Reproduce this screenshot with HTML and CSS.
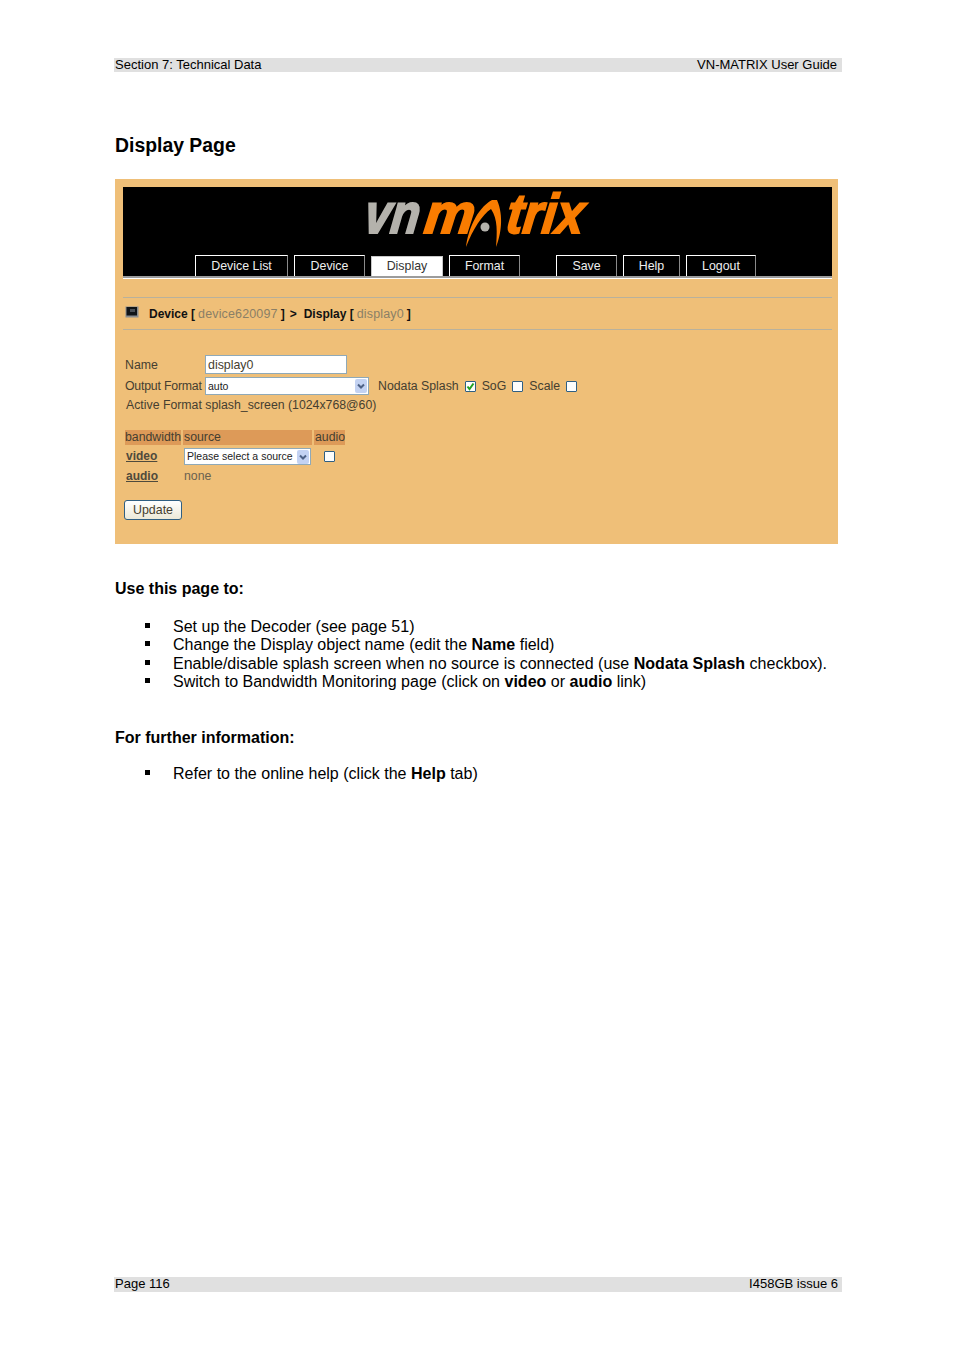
FILE: index.html
```html
<!DOCTYPE html>
<html lang="en">
<head>
  <meta charset="UTF-8" />
  <title>Display Page</title>
  <link rel="stylesheet" href="styles.css">
</head>
<body>
  <div class="page">
    <div class="running-bar"><span>Section 7: Technical Data</span><span>VN-MATRIX User Guide</span></div>

    <h1>Display Page</h1>

    <!-- screenshot of the web interface -->
    <div class="panel">
      <div class="masthead">
        <div class="logo">
          <svg class="logo-svg" width="250" height="60" viewBox="0 0 250 60">
            <text class="logo-text logo-grey" transform="translate(13 44) skewX(-7)" textLength="55" lengthAdjust="spacingAndGlyphs">vn</text>
            <text class="logo-text logo-orange" transform="translate(73 44) skewX(-7)" textLength="50" lengthAdjust="spacingAndGlyphs">m</text>
            <path fill="#f97c00" d="M116 58 C118 42 126 20 142 11 L147 11 C154 27 151 46 146 58 C147 44 148 30 141 20 C132 26 123 40 116 58 Z"/>
            <circle cx="135" cy="38" r="4.5" fill="#b4b2ac"/>
            <text class="logo-text logo-orange" transform="translate(155 44) skewX(-7)" textLength="77" lengthAdjust="spacingAndGlyphs">trix</text>
          </svg>
        </div>
        <nav class="tabs">
          <a class="tab tab-list">Device List</a>
          <a class="tab tab-device">Device</a>
          <a class="tab tab-display active">Display</a>
          <a class="tab tab-format">Format</a>
          <a class="tab tab-save">Save</a>
          <a class="tab tab-help">Help</a>
          <a class="tab tab-logout">Logout</a>
        </nav>
      </div>

      <div class="crumbs">
        <svg class="crumb-icon" width="14" height="12" viewBox="0 0 14 12">
          <rect x="0.5" y="0.5" width="13" height="11" fill="#8a8d90"/>
          <rect x="1.5" y="1" width="10.5" height="8.5" fill="#101418"/>
          <rect x="5" y="3" width="5" height="3" fill="#4a5058"/>
        </svg>
        <b>Device [</b> <span class="crumb-val">device620097</span> <b>]</b>
        <b class="crumb-sep">&gt;</b>
        <b>Display [</b> <span class="crumb-val">display0</span> <b>]</b>
      </div>

      <form class="settings">
        <div class="row row-name">
          <label class="field-label">Name</label>
          <input class="text-input" type="text" value="display0">
        </div>
        <div class="row row-format">
          <label class="field-label tight">Output Format</label>
          <div class="select select-format">
            <select><option>auto</option></select>
            <svg class="select-arrow" width="12" height="14" viewBox="0 0 12 14"><rect width="12" height="14" rx="2" fill="#c3d2f2"/><path d="M3 5.5 L6 8.5 L9 5.5" fill="none" stroke="#4d6185" stroke-width="2"/></svg>
          </div>
          <span class="opt opt-first">Nodata Splash</span>
          <span class="check"><svg width="9" height="9" viewBox="0 0 9 9"><path d="M1.5 4.5 L3.5 7 L7.5 1.5" fill="none" stroke="#21a121" stroke-width="2"/></svg></span>
          <span class="opt">SoG</span>
          <span class="check"></span>
          <span class="opt">Scale</span>
          <span class="check"></span>
        </div>
        <div class="active-format">Active Format splash_screen (1024x768@60)</div>

        <table class="streams">
          <tr class="streams-head"><th class="col-bw">bandwidth</th><th class="col-src">source</th><th class="col-audio">audio</th></tr>
          <tr class="stream-video">
            <td><a class="stream-link">video</a></td>
            <td>
              <div class="select select-source">
                <select><option>Please select a source</option></select>
                <svg class="select-arrow" width="12" height="14" viewBox="0 0 12 14"><rect width="12" height="14" rx="2" fill="#c3d2f2"/><path d="M3 5.5 L6 8.5 L9 5.5" fill="none" stroke="#4d6185" stroke-width="2"/></svg>
              </div>
            </td>
            <td class="cell-check"><span class="check"></span></td>
          </tr>
          <tr class="stream-audio">
            <td><a class="stream-link">audio</a></td>
            <td class="none">none</td>
            <td></td>
          </tr>
        </table>

        <button class="update" type="button">Update</button>
      </form>
    </div>

    <h2 class="first-h2">Use this page to:</h2>
    <ul>
      <li>Set up the Decoder (see page 51)</li>
      <li>Change the Display object name (edit the <b>Name</b> field)</li>
      <li>Enable/disable splash screen when no source is connected (use <b>Nodata Splash</b> checkbox).</li>
      <li>Switch to Bandwidth Monitoring page (click on <b>video</b> or <b>audio</b> link)</li>
    </ul>

    <h2>For further information:</h2>
    <ul>
      <li>Refer to the online help (click the <b>Help</b> tab)</li>
    </ul>

    <div class="running-bar footer-bar"><span>Page 116</span><span>I458GB issue 6</span></div>
  </div>
</body>
</html>
```

FILE: styles.css
```css
:root {
  --panel: #efbf78;
  --rule: #b9b19c;
  --ui-text: #453e30;
  --orange: #f97c00;
}

* {
  box-sizing: border-box;
}

body {
  margin: 0;
  background: white;
  color: #000;
  font-family: "Liberation Sans", Arial, sans-serif;
}

.page {
  width: 954px;
  height: 1351px;
  padding: 58px 112px 59px 114px;
  display: flex;
  flex-direction: column;
}

.running-bar {
  height: 14px;
  background: #e0e0e0;
  display: flex;
  justify-content: space-between;
  padding: 0 5px 0 1px;
  font-size: 13px;
  line-height: 14px;
}

.footer-bar {
  height: 15px;
  margin-top: auto;
  padding-right: 4px;
}

h1 {
  font-size: 19.4px;
  line-height: 22px;
  margin: 62px 0 23px 1px;
}

h2 {
  font-size: 16px;
  line-height: 18px;
  margin: 38px 0 17px 1px;
}

.first-h2 {
  margin-top: 36px;
  margin-bottom: 19px;
}

ul {
  list-style: none;
  margin: 0;
  padding: 0 0 0 59px;
  font-size: 16.04px;
  line-height: 18.4px;
}

li {
  position: relative;
}

li::before {
  content: "";
  position: absolute;
  left: -28px;
  top: 6px;
  width: 5px;
  height: 5px;
  background: #000;
}

/* screenshot panel */
.panel {
  width: 723px;
  height: 365px;
  margin-left: 1px;
  background: var(--panel);
  padding: 8px 6px 0 8px;
  font-size: 12.3px;
  color: var(--ui-text);
}

.masthead {
  height: 89px;
  background: #000;
  box-shadow: 0 2px 0 #9c9c9c, 0 3px 0 #fff;
  display: flex;
  flex-direction: column;
  justify-content: flex-end;
}

.logo {
  height: 66px;
  padding-left: 227px;
}

.logo-svg {
  overflow: visible;
}

.logo-text {
  font-family: "Liberation Sans", Arial, sans-serif;
  font-size: 56px;
  font-weight: bold;
  font-style: italic;
  stroke-width: 2px;
}

.logo-grey {
  fill: #b4b2ac;
  stroke: #b4b2ac;
}

.logo-orange {
  fill: var(--orange);
  stroke: var(--orange);
}

.tabs {
  display: flex;
  gap: 6px;
  padding-left: 72px;
  height: 21px;
}

.tab {
  height: 21px;
  border: 1px solid #fff;
  border-right-color: #8a8a8a;
  border-bottom: none;
  color: #eee;
  text-align: center;
  line-height: 20px;
  font-size: 12.4px;
}

.tab.active {
  background: #fff;
  color: #333;
  border-color: #c8c8c8;
  margin-top: 1px;
  height: 20px;
  line-height: 18px;
}

.tab-list { width: 93px; }
.tab-device { width: 71px; }
.tab-display { width: 72px; }
.tab-format { width: 71px; margin-right: 30px; }
.tab-save { width: 61px; }
.tab-help { width: 57px; }
.tab-logout { width: 70px; }

.crumbs {
  height: 33px;
  margin-top: 21px;
  border-top: 1px solid var(--rule);
  border-bottom: 1px solid var(--rule);
  display: flex;
  align-items: center;
  gap: 3px;
  font-size: 12px;
  color: #111;
  padding-left: 2px;
  white-space: pre;
}

.crumb-icon {
  margin-right: 7px;
  margin-top: -3px;
}

.crumb-val {
  color: #8b7f66;
  font-size: 12.5px;
  letter-spacing: 0.15px;
}

.crumb-sep {
  margin: 0 4px 0 2px;
}

.settings {
  padding: 25px 0 0 2px;
}

.row {
  display: flex;
  align-items: center;
}

.row-name {
  height: 19px;
}

.row-format {
  height: 18px;
  margin-top: 3px;
}

.field-label {
  width: 80px;
  flex: none;
}

.tight {
  letter-spacing: -0.2px;
}

.text-input {
  width: 142px;
  height: 19px;
  border: 1px solid #8fa9b8;
  background: #fff;
  padding: 0 2px;
  font: 12.4px "Liberation Sans", sans-serif;
  color: var(--ui-text);
  border-radius: 0;
  outline: none;
}

.select {
  position: relative;
  background: #fff;
  border: 1px solid #8fa9b8;
}

.select select {
  appearance: none;
  border: none;
  background: transparent;
  display: block;
  width: 100%;
  height: 100%;
  padding: 0 0 0 2px;
  font: 10.5px "Liberation Sans", sans-serif;
  color: #222;
}

.select-arrow {
  position: absolute;
  right: 1px;
  top: 1px;
}

.select-format {
  width: 164px;
  height: 18px;
}

.select-source {
  width: 127px;
  height: 17px;
}

.opt {
  white-space: nowrap;
}

.opt-first {
  margin-left: 9px;
}

.check {
  width: 11px;
  height: 11px;
  flex: none;
  margin: 0 6px;
  background: #fdfdfb;
  border: 1px solid #2f5f83;
  border-radius: 1px;
  display: inline-flex;
  align-items: center;
  justify-content: center;
}

.active-format {
  margin-top: 2px;
  line-height: 17px;
  padding-left: 1px;
}

.streams {
  border-collapse: separate;
  border-spacing: 2px 0;
  margin: 16px 0 0 -2px;
  table-layout: fixed;
  width: 224px;
}

.streams th {
  background: #dd9a58;
  font-weight: normal;
  text-align: left;
  height: 15px;
  padding: 0 0 0 1px;
  line-height: 15px;
  overflow: hidden;
  white-space: nowrap;
}

.streams .col-bw { width: 56px; padding-left: 0; }
.col-src { width: 129px; }
.col-audio { width: 31px; }

.streams td {
  padding: 0 0 0 1px;
}

.stream-video td {
  height: 22px;
  padding-top: 0;
}

.stream-audio td {
  height: 18px;
}

.stream-link {
  font-weight: bold;
  text-decoration: underline;
  color: #4f4a3c;
  font-size: 12px;
}

.none {
  color: #6b6250;
}

.cell-check .check {
  margin: 0 0 0 9px;
  display: flex;
}

.update {
  display: block;
  width: 58px;
  height: 20px;
  margin: 15px 0 0 -1px;
  padding: 0;
  background: linear-gradient(to bottom, #fff, #ece9d8);
  border: 1px solid #2f5f83;
  border-radius: 3px;
  font: 12.4px "Liberation Sans", sans-serif;
  color: var(--ui-text);
}
```
